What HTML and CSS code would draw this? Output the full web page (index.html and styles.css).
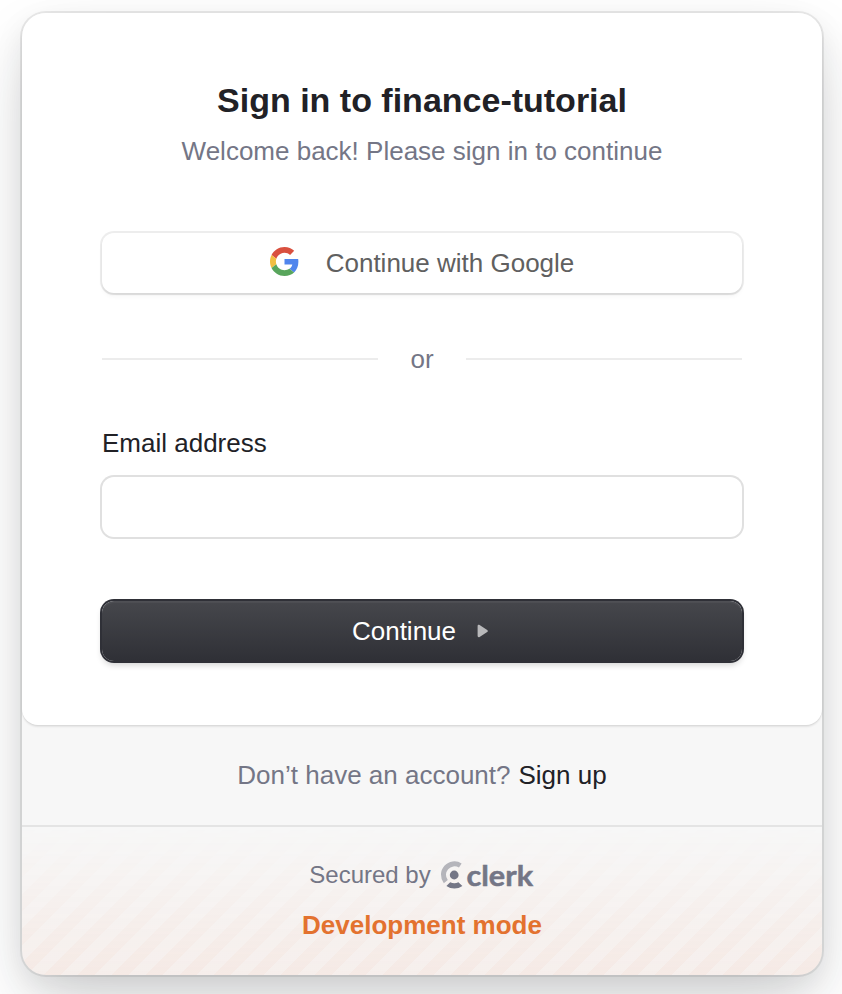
FILE: index.html
```html
<!DOCTYPE html>
<html lang="en">
<head>
<meta charset="utf-8">
<title>Sign in</title>
<link rel="stylesheet" href="styles.css">
</head>
<body>
<div class="card">
  <main class="panel">
    <header class="header">
      <h1 class="title">Sign in to finance-tutorial</h1>
      <p class="subtitle">Welcome back! Please sign in to continue</p>
    </header>
    <button class="social" type="button">
      <svg class="google" viewBox="0 0 48 48" aria-hidden="true">
        <path fill="#d9503f" d="M24 9.5c3.54 0 6.71 1.22 9.21 3.6l6.85-6.85C35.9 2.38 30.47 0 24 0 14.62 0 6.51 5.38 2.56 13.22l7.98 6.19C12.43 13.72 17.74 9.5 24 9.5z"/>
        <path fill="#5085ed" d="M46.98 24.55c0-1.57-.15-3.09-.38-4.55H24v9.02h12.94c-.58 2.96-2.26 5.48-4.78 7.18l7.73 6c4.51-4.18 7.09-10.36 7.09-17.65z"/>
        <path fill="#f2be42" d="M10.53 28.59c-.48-1.45-.76-2.99-.76-4.59s.27-3.14.76-4.59l-7.98-6.19C.92 16.46 0 20.12 0 24c0 3.88.92 7.54 2.56 10.78l7.97-6.19z"/>
        <path fill="#58a55c" d="M24 48c6.48 0 11.93-2.13 15.89-5.81l-7.73-6c-2.15 1.45-4.92 2.3-8.16 2.3-6.26 0-11.57-4.22-13.47-9.91l-7.98 6.19C6.51 42.62 14.62 48 24 48z"/>
      </svg>
      <span class="social-label">Continue with Google</span>
    </button>
    <div class="divider"><span class="or">or</span></div>
    <label class="label" for="email">Email address</label>
    <input class="input" id="email" type="email">
    <button class="submit" type="button">
      <span>Continue</span>
      <svg class="arrow" viewBox="0 0 12 14" aria-hidden="true"><path fill="#b8b8ba" d="M.6 2.200C.6 1 1.600.5 2.600 1.100l7.600 4.800c.8.500.8 1.700 0 2.200L2.600 12.900C1.600 13.500.6 13 .6 11.800z"/></svg>
    </button>
  </main>
  <div class="signup"><span>Don’t have an account?</span><a class="link">Sign up</a></div>
  <footer class="footer">
    <div class="secured">
      <span>Secured by</span>
      <svg class="clerk" viewBox="0 0 94 32" aria-hidden="true">
        <path fill="none" stroke="#b5b5bb" stroke-width="5" d="M20.300 6.500A11 11 0 0 0 5.800 22.600"/>
        <circle cx="14.200" cy="16" r="4.400" fill="#747686"/>
        <path fill="#747686" d="M10.200 23.200a8.500 8.500 0 0 0 8.200 0l4 3.700a13.500 13.500 0 0 1-16 0z"/>
        <text class="wordmark" x="26.500" y="26.500" textLength="66.500" lengthAdjust="spacingAndGlyphs">clerk</text>
      </svg>
    </div>
    <p class="mode">Development mode</p>
  </footer>
</div>
</body>
</html>
```
FILE: styles.css
```css
* { box-sizing: border-box; }
body {
  margin: 0;
  height: 994px;
  padding: 13px 20px 0 22px;
  overflow: hidden;
  background: #fff;
  font-family: "Liberation Sans", Arial, sans-serif;
  font-size: 26px;
}
h1, p { margin: 0; }
button { font: inherit; border: 0; }
.card {
  width: 800px;
  height: 962px;
  border-radius: 24px;
  background: #f7f7f7;
  display: flex;
  flex-direction: column;
  box-shadow: 0 30px 70px -10px rgba(25, 28, 33, .2), 0 10px 30px rgba(0, 0, 0, .08), 0 0 0 2px rgba(0, 0, 0, .08);
}
.panel {
  height: 712px;
  padding: 63px 80px 0;
  background: #fff;
  border-radius: 24px 24px 16px 16px;
  display: flex;
  flex-direction: column;
  box-shadow: 0 2px 2px rgba(0, 0, 0, .08), 0 1px 1px rgba(0, 0, 0, .05);
}
.header { height: 157px; text-align: center; white-space: nowrap; }
.title { font-size: 34px; line-height: 48px; color: #212126; }
.subtitle { margin-top: 9px; line-height: 36px; color: #747686; }
.social {
  height: 60px;
  flex: none;
  display: flex;
  align-items: center;
  justify-content: center;
  gap: 27px;
  border-radius: 12px;
  background: #fff;
  color: #606060;
  box-shadow: 0 0 0 2px rgba(0, 0, 0, .07), 0 2px 2px rgba(0, 0, 0, .06), 0 4px 4px rgba(0, 0, 0, .03);
}
.google { width: 29px; height: 29px; margin-top: -4px; }
.divider {
  height: 36px;
  margin-top: 48px;
  display: flex;
  align-items: center;
  gap: 32px;
  color: #747686;
}
.divider::before, .divider::after { content: ""; flex: 1; height: 2px; background: #ececec; }
.label { margin-top: 48px; line-height: 36px; color: #212126; }
.input {
  width: 100%;
  height: 60px;
  flex: none;
  margin-top: 16px;
  padding: 0 24px;
  border: 0;
  outline: 0;
  border-radius: 12px;
  font: inherit;
  box-shadow: 0 0 0 2px #e0e0e0;
}
.submit {
  height: 60px;
  flex: none;
  margin-top: 64px;
  padding: 0 9px 0 6px;
  display: flex;
  align-items: center;
  justify-content: center;
  gap: 21px;
  border-radius: 12px;
  color: #fff;
  background: linear-gradient(#46474c, #2f3036);
  box-shadow: 0 0 0 2px #2f3037, inset 0 2px 1px rgba(255, 255, 255, .05), 0 4px 6px rgba(0, 0, 0, .18);
}
.arrow { width: 12px; height: 14px; }
.signup {
  height: 100px;
  display: flex;
  align-items: center;
  justify-content: center;
  gap: 8px;
  color: #747686;
}
.link { color: #212126; }
.footer {
  height: 150px;
  border-top: 2px solid #e4e4e4;
  border-radius: 0 0 24px 24px;
  overflow: hidden;
  position: relative;
  display: flex;
  flex-direction: column;
  align-items: center;
  padding-top: 32px;
}
.footer::before {
  content: "";
  position: absolute;
  inset: 0 0 -2px;
  background: repeating-linear-gradient(-45deg, rgba(235, 105, 50, .055) 0 12px, rgba(235, 105, 50, .09) 12px 24px);
  -webkit-mask-image: linear-gradient(transparent, #000);
  mask-image: linear-gradient(transparent, #000);
}
.secured {
  position: relative;
  height: 32px;
  margin-right: 1px;
  display: flex;
  align-items: center;
  gap: 9px;
  font-size: 24px;
  color: #747686;
}
.clerk { width: 94px; height: 32px; overflow: visible; }
.wordmark { font: 700 29px Lato, sans-serif; fill: #747686; stroke: #747686; stroke-width: .5px; }
.mode { position: relative; margin-top: 16px; line-height: 36px; font-weight: 700; color: #e3722f; }
```
